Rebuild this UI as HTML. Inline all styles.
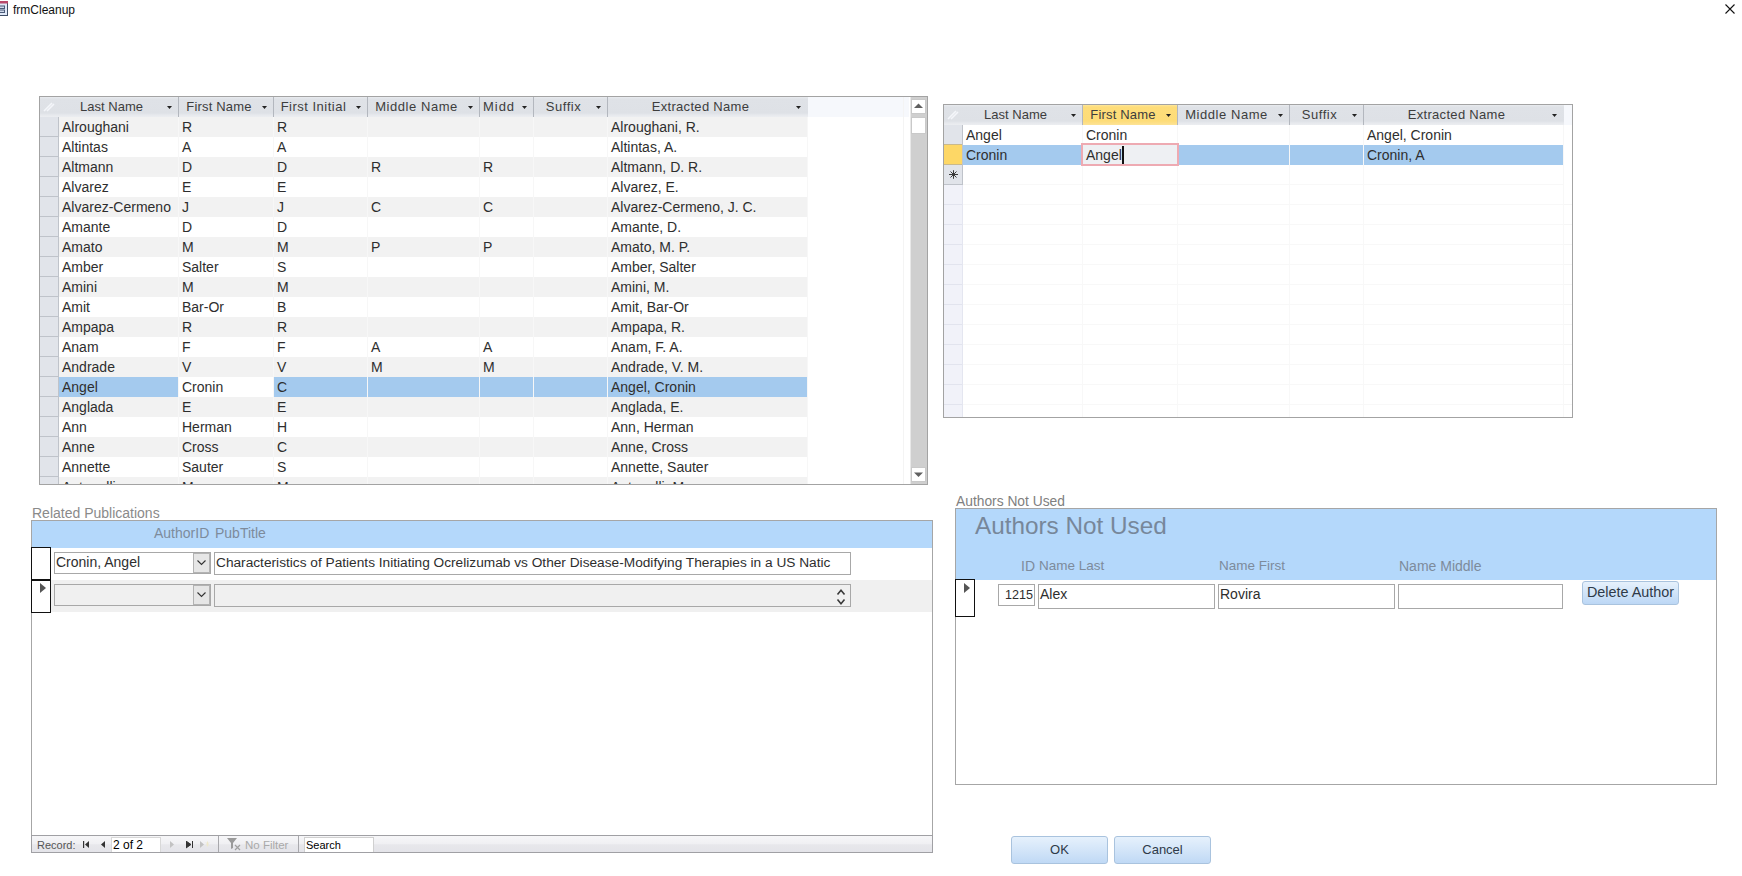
<!DOCTYPE html><html><head><meta charset="utf-8"><style>
html,body{margin:0;padding:0;background:#fff;width:1742px;height:876px;overflow:hidden;position:relative;font-family:"Liberation Sans",sans-serif;}
div{position:absolute;box-sizing:border-box;}
.t{white-space:nowrap;line-height:20px;font-size:14px;color:#2e2e2e;}
.hd{white-space:nowrap;line-height:19px;font-size:13px;color:#3d3d3d;}
svg{position:absolute;}
</style></head><body>
<svg style="left:0;top:0" width="10" height="18" viewBox="0 0 10 18">
<rect x="-1" y="1.5" width="8.5" height="14" fill="#dfe8f7" stroke="#3e4d66" stroke-width="1"/>
<rect x="-1" y="1" width="9" height="2.5" fill="#b9496b"/>
<rect x="-1" y="6" width="5.5" height="2.5" fill="#cfd9ea" stroke="#4a5a78" stroke-width="1"/>
<rect x="-1" y="10" width="5.5" height="2.5" fill="#cfd9ea" stroke="#4a5a78" stroke-width="1"/>
</svg>
<div class="t" style="left:13px;top:1px;font-size:12px;line-height:18px;color:#111;">frmCleanup</div>
<svg style="left:1724px;top:3px" width="12" height="12" viewBox="0 0 12 12">
<path d="M1.5 1.5 L10.5 10.5 M10.5 1.5 L1.5 10.5" stroke="#111" stroke-width="1.1"/></svg>
<div style="left:39px;top:96px;width:889px;height:389px;border:1px solid #a3a3a3;background:#fff;"></div>
<div style="left:40px;top:97px;width:887px;height:387px;overflow:hidden;">
<div style="left:0px;top:0px;width:19px;height:20px;background:linear-gradient(#e9ebef 0px,#dfe2e7 2px,#dee1e6 16px,#e7e9ed 18px,#eceef1 20px);"></div>
<svg style="left:3px;top:3px" width="12" height="12"><path d="M1 11 L9 3 M4 11 L11 4" stroke="#f4f6fa" stroke-width="1.6"/></svg>
<div style="left:768px;top:0px;width:101px;height:20px;background:#f6f8fc;"></div>
<div style="left:19px;top:0px;width:120px;height:20px;background:linear-gradient(#e9ebef 0px,#dfe2e7 2px,#dee1e6 16px,#e7e9ed 18px,#eceef1 20px);border-right:1px solid #b3b7be;"></div>
<div class="hd" style="left:19px;top:0px;width:105px;height:19px;text-align:center;letter-spacing:0.03px;">Last Name</div>
<svg style="left:127px;top:9px" width="6" height="4"><path d="M0 0 H5 L2.5 3 Z" fill="#222"/></svg>
<div style="left:139px;top:0px;width:95px;height:20px;background:linear-gradient(#e9ebef 0px,#dfe2e7 2px,#dee1e6 16px,#e7e9ed 18px,#eceef1 20px);border-right:1px solid #b3b7be;"></div>
<div class="hd" style="left:139px;top:0px;width:80px;height:19px;text-align:center;letter-spacing:0.19px;">First Name</div>
<svg style="left:222px;top:9px" width="6" height="4"><path d="M0 0 H5 L2.5 3 Z" fill="#222"/></svg>
<div style="left:234px;top:0px;width:94px;height:20px;background:linear-gradient(#e9ebef 0px,#dfe2e7 2px,#dee1e6 16px,#e7e9ed 18px,#eceef1 20px);border-right:1px solid #b3b7be;"></div>
<div class="hd" style="left:234px;top:0px;width:79px;height:19px;text-align:center;letter-spacing:0.50px;">First Initial</div>
<svg style="left:316px;top:9px" width="6" height="4"><path d="M0 0 H5 L2.5 3 Z" fill="#222"/></svg>
<div style="left:328px;top:0px;width:112px;height:20px;background:linear-gradient(#e9ebef 0px,#dfe2e7 2px,#dee1e6 16px,#e7e9ed 18px,#eceef1 20px);border-right:1px solid #b3b7be;"></div>
<div class="hd" style="left:328px;top:0px;width:97px;height:19px;text-align:center;letter-spacing:0.56px;">Middle Name</div>
<svg style="left:428px;top:9px" width="6" height="4"><path d="M0 0 H5 L2.5 3 Z" fill="#222"/></svg>
<div style="left:440px;top:0px;width:54px;height:20px;background:linear-gradient(#e9ebef 0px,#dfe2e7 2px,#dee1e6 16px,#e7e9ed 18px,#eceef1 20px);border-right:1px solid #b3b7be;"></div>
<div class="hd" style="left:443px;top:0px;font-size:13px;letter-spacing:0.97px;">Midd</div>
<svg style="left:482px;top:9px" width="6" height="4"><path d="M0 0 H5 L2.5 3 Z" fill="#222"/></svg>
<div style="left:494px;top:0px;width:74px;height:20px;background:linear-gradient(#e9ebef 0px,#dfe2e7 2px,#dee1e6 16px,#e7e9ed 18px,#eceef1 20px);border-right:1px solid #b3b7be;"></div>
<div class="hd" style="left:494px;top:0px;width:59px;height:19px;text-align:center;letter-spacing:0.56px;">Suffix</div>
<svg style="left:556px;top:9px" width="6" height="4"><path d="M0 0 H5 L2.5 3 Z" fill="#222"/></svg>
<div style="left:568px;top:0px;width:200px;height:20px;background:linear-gradient(#e9ebef 0px,#dfe2e7 2px,#dee1e6 16px,#e7e9ed 18px,#eceef1 20px);"></div>
<div class="hd" style="left:568px;top:0px;width:185px;height:19px;text-align:center;letter-spacing:0.31px;">Extracted Name</div>
<svg style="left:756px;top:9px" width="6" height="4"><path d="M0 0 H5 L2.5 3 Z" fill="#222"/></svg>
<div style="left:0px;top:20px;width:19px;height:20px;background:#e1e4ea;border-bottom:1px solid #bfc3ca;"></div>
<div style="left:19px;top:20px;width:749px;height:20px;background:#f2f2f2;"></div>
<div style="left:19px;top:20px;width:120px;height:20px;border-right:1px solid #f7f7f7;"></div>
<div class="t" style="left:22px;top:20px;font-size:14px;line-height:21px;">Alroughani</div>
<div style="left:139px;top:20px;width:95px;height:20px;border-right:1px solid #f7f7f7;"></div>
<div class="t" style="left:142px;top:20px;font-size:14px;line-height:21px;">R</div>
<div style="left:234px;top:20px;width:94px;height:20px;border-right:1px solid #f7f7f7;"></div>
<div class="t" style="left:237px;top:20px;font-size:14px;line-height:21px;">R</div>
<div style="left:328px;top:20px;width:112px;height:20px;border-right:1px solid #f7f7f7;"></div>
<div style="left:440px;top:20px;width:54px;height:20px;border-right:1px solid #f7f7f7;"></div>
<div style="left:494px;top:20px;width:74px;height:20px;border-right:1px solid #f7f7f7;"></div>
<div style="left:568px;top:20px;width:200px;height:20px;border-right:1px solid #f7f7f7;"></div>
<div class="t" style="left:571px;top:20px;font-size:14px;line-height:21px;">Alroughani, R.</div>
<div style="left:0px;top:40px;width:19px;height:20px;background:#e1e4ea;border-bottom:1px solid #bfc3ca;"></div>
<div style="left:19px;top:40px;width:749px;height:20px;background:#ffffff;"></div>
<div style="left:19px;top:40px;width:120px;height:20px;border-right:1px solid #f7f7f7;"></div>
<div class="t" style="left:22px;top:40px;font-size:14px;line-height:21px;">Altintas</div>
<div style="left:139px;top:40px;width:95px;height:20px;border-right:1px solid #f7f7f7;"></div>
<div class="t" style="left:142px;top:40px;font-size:14px;line-height:21px;">A</div>
<div style="left:234px;top:40px;width:94px;height:20px;border-right:1px solid #f7f7f7;"></div>
<div class="t" style="left:237px;top:40px;font-size:14px;line-height:21px;">A</div>
<div style="left:328px;top:40px;width:112px;height:20px;border-right:1px solid #f7f7f7;"></div>
<div style="left:440px;top:40px;width:54px;height:20px;border-right:1px solid #f7f7f7;"></div>
<div style="left:494px;top:40px;width:74px;height:20px;border-right:1px solid #f7f7f7;"></div>
<div style="left:568px;top:40px;width:200px;height:20px;border-right:1px solid #f7f7f7;"></div>
<div class="t" style="left:571px;top:40px;font-size:14px;line-height:21px;">Altintas, A.</div>
<div style="left:0px;top:60px;width:19px;height:20px;background:#e1e4ea;border-bottom:1px solid #bfc3ca;"></div>
<div style="left:19px;top:60px;width:749px;height:20px;background:#f2f2f2;"></div>
<div style="left:19px;top:60px;width:120px;height:20px;border-right:1px solid #f7f7f7;"></div>
<div class="t" style="left:22px;top:60px;font-size:14px;line-height:21px;">Altmann</div>
<div style="left:139px;top:60px;width:95px;height:20px;border-right:1px solid #f7f7f7;"></div>
<div class="t" style="left:142px;top:60px;font-size:14px;line-height:21px;">D</div>
<div style="left:234px;top:60px;width:94px;height:20px;border-right:1px solid #f7f7f7;"></div>
<div class="t" style="left:237px;top:60px;font-size:14px;line-height:21px;">D</div>
<div style="left:328px;top:60px;width:112px;height:20px;border-right:1px solid #f7f7f7;"></div>
<div class="t" style="left:331px;top:60px;font-size:14px;line-height:21px;">R</div>
<div style="left:440px;top:60px;width:54px;height:20px;border-right:1px solid #f7f7f7;"></div>
<div class="t" style="left:443px;top:60px;font-size:14px;line-height:21px;">R</div>
<div style="left:494px;top:60px;width:74px;height:20px;border-right:1px solid #f7f7f7;"></div>
<div style="left:568px;top:60px;width:200px;height:20px;border-right:1px solid #f7f7f7;"></div>
<div class="t" style="left:571px;top:60px;font-size:14px;line-height:21px;">Altmann, D. R.</div>
<div style="left:0px;top:80px;width:19px;height:20px;background:#e1e4ea;border-bottom:1px solid #bfc3ca;"></div>
<div style="left:19px;top:80px;width:749px;height:20px;background:#ffffff;"></div>
<div style="left:19px;top:80px;width:120px;height:20px;border-right:1px solid #f7f7f7;"></div>
<div class="t" style="left:22px;top:80px;font-size:14px;line-height:21px;">Alvarez</div>
<div style="left:139px;top:80px;width:95px;height:20px;border-right:1px solid #f7f7f7;"></div>
<div class="t" style="left:142px;top:80px;font-size:14px;line-height:21px;">E</div>
<div style="left:234px;top:80px;width:94px;height:20px;border-right:1px solid #f7f7f7;"></div>
<div class="t" style="left:237px;top:80px;font-size:14px;line-height:21px;">E</div>
<div style="left:328px;top:80px;width:112px;height:20px;border-right:1px solid #f7f7f7;"></div>
<div style="left:440px;top:80px;width:54px;height:20px;border-right:1px solid #f7f7f7;"></div>
<div style="left:494px;top:80px;width:74px;height:20px;border-right:1px solid #f7f7f7;"></div>
<div style="left:568px;top:80px;width:200px;height:20px;border-right:1px solid #f7f7f7;"></div>
<div class="t" style="left:571px;top:80px;font-size:14px;line-height:21px;">Alvarez, E.</div>
<div style="left:0px;top:100px;width:19px;height:20px;background:#e1e4ea;border-bottom:1px solid #bfc3ca;"></div>
<div style="left:19px;top:100px;width:749px;height:20px;background:#f2f2f2;"></div>
<div style="left:19px;top:100px;width:120px;height:20px;border-right:1px solid #f7f7f7;"></div>
<div class="t" style="left:22px;top:100px;font-size:14px;line-height:21px;">Alvarez-Cermeno</div>
<div style="left:139px;top:100px;width:95px;height:20px;border-right:1px solid #f7f7f7;"></div>
<div class="t" style="left:142px;top:100px;font-size:14px;line-height:21px;">J</div>
<div style="left:234px;top:100px;width:94px;height:20px;border-right:1px solid #f7f7f7;"></div>
<div class="t" style="left:237px;top:100px;font-size:14px;line-height:21px;">J</div>
<div style="left:328px;top:100px;width:112px;height:20px;border-right:1px solid #f7f7f7;"></div>
<div class="t" style="left:331px;top:100px;font-size:14px;line-height:21px;">C</div>
<div style="left:440px;top:100px;width:54px;height:20px;border-right:1px solid #f7f7f7;"></div>
<div class="t" style="left:443px;top:100px;font-size:14px;line-height:21px;">C</div>
<div style="left:494px;top:100px;width:74px;height:20px;border-right:1px solid #f7f7f7;"></div>
<div style="left:568px;top:100px;width:200px;height:20px;border-right:1px solid #f7f7f7;"></div>
<div class="t" style="left:571px;top:100px;font-size:14px;line-height:21px;">Alvarez-Cermeno, J. C.</div>
<div style="left:0px;top:120px;width:19px;height:20px;background:#e1e4ea;border-bottom:1px solid #bfc3ca;"></div>
<div style="left:19px;top:120px;width:749px;height:20px;background:#ffffff;"></div>
<div style="left:19px;top:120px;width:120px;height:20px;border-right:1px solid #f7f7f7;"></div>
<div class="t" style="left:22px;top:120px;font-size:14px;line-height:21px;">Amante</div>
<div style="left:139px;top:120px;width:95px;height:20px;border-right:1px solid #f7f7f7;"></div>
<div class="t" style="left:142px;top:120px;font-size:14px;line-height:21px;">D</div>
<div style="left:234px;top:120px;width:94px;height:20px;border-right:1px solid #f7f7f7;"></div>
<div class="t" style="left:237px;top:120px;font-size:14px;line-height:21px;">D</div>
<div style="left:328px;top:120px;width:112px;height:20px;border-right:1px solid #f7f7f7;"></div>
<div style="left:440px;top:120px;width:54px;height:20px;border-right:1px solid #f7f7f7;"></div>
<div style="left:494px;top:120px;width:74px;height:20px;border-right:1px solid #f7f7f7;"></div>
<div style="left:568px;top:120px;width:200px;height:20px;border-right:1px solid #f7f7f7;"></div>
<div class="t" style="left:571px;top:120px;font-size:14px;line-height:21px;">Amante, D.</div>
<div style="left:0px;top:140px;width:19px;height:20px;background:#e1e4ea;border-bottom:1px solid #bfc3ca;"></div>
<div style="left:19px;top:140px;width:749px;height:20px;background:#f2f2f2;"></div>
<div style="left:19px;top:140px;width:120px;height:20px;border-right:1px solid #f7f7f7;"></div>
<div class="t" style="left:22px;top:140px;font-size:14px;line-height:21px;">Amato</div>
<div style="left:139px;top:140px;width:95px;height:20px;border-right:1px solid #f7f7f7;"></div>
<div class="t" style="left:142px;top:140px;font-size:14px;line-height:21px;">M</div>
<div style="left:234px;top:140px;width:94px;height:20px;border-right:1px solid #f7f7f7;"></div>
<div class="t" style="left:237px;top:140px;font-size:14px;line-height:21px;">M</div>
<div style="left:328px;top:140px;width:112px;height:20px;border-right:1px solid #f7f7f7;"></div>
<div class="t" style="left:331px;top:140px;font-size:14px;line-height:21px;">P</div>
<div style="left:440px;top:140px;width:54px;height:20px;border-right:1px solid #f7f7f7;"></div>
<div class="t" style="left:443px;top:140px;font-size:14px;line-height:21px;">P</div>
<div style="left:494px;top:140px;width:74px;height:20px;border-right:1px solid #f7f7f7;"></div>
<div style="left:568px;top:140px;width:200px;height:20px;border-right:1px solid #f7f7f7;"></div>
<div class="t" style="left:571px;top:140px;font-size:14px;line-height:21px;">Amato, M. P.</div>
<div style="left:0px;top:160px;width:19px;height:20px;background:#e1e4ea;border-bottom:1px solid #bfc3ca;"></div>
<div style="left:19px;top:160px;width:749px;height:20px;background:#ffffff;"></div>
<div style="left:19px;top:160px;width:120px;height:20px;border-right:1px solid #f7f7f7;"></div>
<div class="t" style="left:22px;top:160px;font-size:14px;line-height:21px;">Amber</div>
<div style="left:139px;top:160px;width:95px;height:20px;border-right:1px solid #f7f7f7;"></div>
<div class="t" style="left:142px;top:160px;font-size:14px;line-height:21px;">Salter</div>
<div style="left:234px;top:160px;width:94px;height:20px;border-right:1px solid #f7f7f7;"></div>
<div class="t" style="left:237px;top:160px;font-size:14px;line-height:21px;">S</div>
<div style="left:328px;top:160px;width:112px;height:20px;border-right:1px solid #f7f7f7;"></div>
<div style="left:440px;top:160px;width:54px;height:20px;border-right:1px solid #f7f7f7;"></div>
<div style="left:494px;top:160px;width:74px;height:20px;border-right:1px solid #f7f7f7;"></div>
<div style="left:568px;top:160px;width:200px;height:20px;border-right:1px solid #f7f7f7;"></div>
<div class="t" style="left:571px;top:160px;font-size:14px;line-height:21px;">Amber, Salter</div>
<div style="left:0px;top:180px;width:19px;height:20px;background:#e1e4ea;border-bottom:1px solid #bfc3ca;"></div>
<div style="left:19px;top:180px;width:749px;height:20px;background:#f2f2f2;"></div>
<div style="left:19px;top:180px;width:120px;height:20px;border-right:1px solid #f7f7f7;"></div>
<div class="t" style="left:22px;top:180px;font-size:14px;line-height:21px;">Amini</div>
<div style="left:139px;top:180px;width:95px;height:20px;border-right:1px solid #f7f7f7;"></div>
<div class="t" style="left:142px;top:180px;font-size:14px;line-height:21px;">M</div>
<div style="left:234px;top:180px;width:94px;height:20px;border-right:1px solid #f7f7f7;"></div>
<div class="t" style="left:237px;top:180px;font-size:14px;line-height:21px;">M</div>
<div style="left:328px;top:180px;width:112px;height:20px;border-right:1px solid #f7f7f7;"></div>
<div style="left:440px;top:180px;width:54px;height:20px;border-right:1px solid #f7f7f7;"></div>
<div style="left:494px;top:180px;width:74px;height:20px;border-right:1px solid #f7f7f7;"></div>
<div style="left:568px;top:180px;width:200px;height:20px;border-right:1px solid #f7f7f7;"></div>
<div class="t" style="left:571px;top:180px;font-size:14px;line-height:21px;">Amini, M.</div>
<div style="left:0px;top:200px;width:19px;height:20px;background:#e1e4ea;border-bottom:1px solid #bfc3ca;"></div>
<div style="left:19px;top:200px;width:749px;height:20px;background:#ffffff;"></div>
<div style="left:19px;top:200px;width:120px;height:20px;border-right:1px solid #f7f7f7;"></div>
<div class="t" style="left:22px;top:200px;font-size:14px;line-height:21px;">Amit</div>
<div style="left:139px;top:200px;width:95px;height:20px;border-right:1px solid #f7f7f7;"></div>
<div class="t" style="left:142px;top:200px;font-size:14px;line-height:21px;">Bar-Or</div>
<div style="left:234px;top:200px;width:94px;height:20px;border-right:1px solid #f7f7f7;"></div>
<div class="t" style="left:237px;top:200px;font-size:14px;line-height:21px;">B</div>
<div style="left:328px;top:200px;width:112px;height:20px;border-right:1px solid #f7f7f7;"></div>
<div style="left:440px;top:200px;width:54px;height:20px;border-right:1px solid #f7f7f7;"></div>
<div style="left:494px;top:200px;width:74px;height:20px;border-right:1px solid #f7f7f7;"></div>
<div style="left:568px;top:200px;width:200px;height:20px;border-right:1px solid #f7f7f7;"></div>
<div class="t" style="left:571px;top:200px;font-size:14px;line-height:21px;">Amit, Bar-Or</div>
<div style="left:0px;top:220px;width:19px;height:20px;background:#e1e4ea;border-bottom:1px solid #bfc3ca;"></div>
<div style="left:19px;top:220px;width:749px;height:20px;background:#f2f2f2;"></div>
<div style="left:19px;top:220px;width:120px;height:20px;border-right:1px solid #f7f7f7;"></div>
<div class="t" style="left:22px;top:220px;font-size:14px;line-height:21px;">Ampapa</div>
<div style="left:139px;top:220px;width:95px;height:20px;border-right:1px solid #f7f7f7;"></div>
<div class="t" style="left:142px;top:220px;font-size:14px;line-height:21px;">R</div>
<div style="left:234px;top:220px;width:94px;height:20px;border-right:1px solid #f7f7f7;"></div>
<div class="t" style="left:237px;top:220px;font-size:14px;line-height:21px;">R</div>
<div style="left:328px;top:220px;width:112px;height:20px;border-right:1px solid #f7f7f7;"></div>
<div style="left:440px;top:220px;width:54px;height:20px;border-right:1px solid #f7f7f7;"></div>
<div style="left:494px;top:220px;width:74px;height:20px;border-right:1px solid #f7f7f7;"></div>
<div style="left:568px;top:220px;width:200px;height:20px;border-right:1px solid #f7f7f7;"></div>
<div class="t" style="left:571px;top:220px;font-size:14px;line-height:21px;">Ampapa, R.</div>
<div style="left:0px;top:240px;width:19px;height:20px;background:#e1e4ea;border-bottom:1px solid #bfc3ca;"></div>
<div style="left:19px;top:240px;width:749px;height:20px;background:#ffffff;"></div>
<div style="left:19px;top:240px;width:120px;height:20px;border-right:1px solid #f7f7f7;"></div>
<div class="t" style="left:22px;top:240px;font-size:14px;line-height:21px;">Anam</div>
<div style="left:139px;top:240px;width:95px;height:20px;border-right:1px solid #f7f7f7;"></div>
<div class="t" style="left:142px;top:240px;font-size:14px;line-height:21px;">F</div>
<div style="left:234px;top:240px;width:94px;height:20px;border-right:1px solid #f7f7f7;"></div>
<div class="t" style="left:237px;top:240px;font-size:14px;line-height:21px;">F</div>
<div style="left:328px;top:240px;width:112px;height:20px;border-right:1px solid #f7f7f7;"></div>
<div class="t" style="left:331px;top:240px;font-size:14px;line-height:21px;">A</div>
<div style="left:440px;top:240px;width:54px;height:20px;border-right:1px solid #f7f7f7;"></div>
<div class="t" style="left:443px;top:240px;font-size:14px;line-height:21px;">A</div>
<div style="left:494px;top:240px;width:74px;height:20px;border-right:1px solid #f7f7f7;"></div>
<div style="left:568px;top:240px;width:200px;height:20px;border-right:1px solid #f7f7f7;"></div>
<div class="t" style="left:571px;top:240px;font-size:14px;line-height:21px;">Anam, F. A.</div>
<div style="left:0px;top:260px;width:19px;height:20px;background:#e1e4ea;border-bottom:1px solid #bfc3ca;"></div>
<div style="left:19px;top:260px;width:749px;height:20px;background:#f2f2f2;"></div>
<div style="left:19px;top:260px;width:120px;height:20px;border-right:1px solid #f7f7f7;"></div>
<div class="t" style="left:22px;top:260px;font-size:14px;line-height:21px;">Andrade</div>
<div style="left:139px;top:260px;width:95px;height:20px;border-right:1px solid #f7f7f7;"></div>
<div class="t" style="left:142px;top:260px;font-size:14px;line-height:21px;">V</div>
<div style="left:234px;top:260px;width:94px;height:20px;border-right:1px solid #f7f7f7;"></div>
<div class="t" style="left:237px;top:260px;font-size:14px;line-height:21px;">V</div>
<div style="left:328px;top:260px;width:112px;height:20px;border-right:1px solid #f7f7f7;"></div>
<div class="t" style="left:331px;top:260px;font-size:14px;line-height:21px;">M</div>
<div style="left:440px;top:260px;width:54px;height:20px;border-right:1px solid #f7f7f7;"></div>
<div class="t" style="left:443px;top:260px;font-size:14px;line-height:21px;">M</div>
<div style="left:494px;top:260px;width:74px;height:20px;border-right:1px solid #f7f7f7;"></div>
<div style="left:568px;top:260px;width:200px;height:20px;border-right:1px solid #f7f7f7;"></div>
<div class="t" style="left:571px;top:260px;font-size:14px;line-height:21px;">Andrade, V. M.</div>
<div style="left:0px;top:280px;width:19px;height:20px;background:#e1e4ea;border-bottom:1px solid #bfc3ca;"></div>
<div style="left:19px;top:280px;width:749px;height:20px;background:#a4caee;"></div>
<div style="left:19px;top:280px;width:120px;height:20px;border-right:1px solid #f7f7f7;"></div>
<div class="t" style="left:22px;top:280px;font-size:14px;line-height:21px;">Angel</div>
<div style="left:139px;top:280px;width:95px;height:20px;border-right:1px solid #f7f7f7;background:#ffffff;"></div>
<div class="t" style="left:142px;top:280px;font-size:14px;line-height:21px;">Cronin</div>
<div style="left:234px;top:280px;width:94px;height:20px;border-right:1px solid #f7f7f7;"></div>
<div class="t" style="left:237px;top:280px;font-size:14px;line-height:21px;">C</div>
<div style="left:328px;top:280px;width:112px;height:20px;border-right:1px solid #f7f7f7;"></div>
<div style="left:440px;top:280px;width:54px;height:20px;border-right:1px solid #f7f7f7;"></div>
<div style="left:494px;top:280px;width:74px;height:20px;border-right:1px solid #f7f7f7;"></div>
<div style="left:568px;top:280px;width:200px;height:20px;border-right:1px solid #f7f7f7;"></div>
<div class="t" style="left:571px;top:280px;font-size:14px;line-height:21px;">Angel, Cronin</div>
<div style="left:0px;top:300px;width:19px;height:20px;background:#e1e4ea;border-bottom:1px solid #bfc3ca;"></div>
<div style="left:19px;top:300px;width:749px;height:20px;background:#f2f2f2;"></div>
<div style="left:19px;top:300px;width:120px;height:20px;border-right:1px solid #f7f7f7;"></div>
<div class="t" style="left:22px;top:300px;font-size:14px;line-height:21px;">Anglada</div>
<div style="left:139px;top:300px;width:95px;height:20px;border-right:1px solid #f7f7f7;"></div>
<div class="t" style="left:142px;top:300px;font-size:14px;line-height:21px;">E</div>
<div style="left:234px;top:300px;width:94px;height:20px;border-right:1px solid #f7f7f7;"></div>
<div class="t" style="left:237px;top:300px;font-size:14px;line-height:21px;">E</div>
<div style="left:328px;top:300px;width:112px;height:20px;border-right:1px solid #f7f7f7;"></div>
<div style="left:440px;top:300px;width:54px;height:20px;border-right:1px solid #f7f7f7;"></div>
<div style="left:494px;top:300px;width:74px;height:20px;border-right:1px solid #f7f7f7;"></div>
<div style="left:568px;top:300px;width:200px;height:20px;border-right:1px solid #f7f7f7;"></div>
<div class="t" style="left:571px;top:300px;font-size:14px;line-height:21px;">Anglada, E.</div>
<div style="left:0px;top:320px;width:19px;height:20px;background:#e1e4ea;border-bottom:1px solid #bfc3ca;"></div>
<div style="left:19px;top:320px;width:749px;height:20px;background:#ffffff;"></div>
<div style="left:19px;top:320px;width:120px;height:20px;border-right:1px solid #f7f7f7;"></div>
<div class="t" style="left:22px;top:320px;font-size:14px;line-height:21px;">Ann</div>
<div style="left:139px;top:320px;width:95px;height:20px;border-right:1px solid #f7f7f7;"></div>
<div class="t" style="left:142px;top:320px;font-size:14px;line-height:21px;">Herman</div>
<div style="left:234px;top:320px;width:94px;height:20px;border-right:1px solid #f7f7f7;"></div>
<div class="t" style="left:237px;top:320px;font-size:14px;line-height:21px;">H</div>
<div style="left:328px;top:320px;width:112px;height:20px;border-right:1px solid #f7f7f7;"></div>
<div style="left:440px;top:320px;width:54px;height:20px;border-right:1px solid #f7f7f7;"></div>
<div style="left:494px;top:320px;width:74px;height:20px;border-right:1px solid #f7f7f7;"></div>
<div style="left:568px;top:320px;width:200px;height:20px;border-right:1px solid #f7f7f7;"></div>
<div class="t" style="left:571px;top:320px;font-size:14px;line-height:21px;">Ann, Herman</div>
<div style="left:0px;top:340px;width:19px;height:20px;background:#e1e4ea;border-bottom:1px solid #bfc3ca;"></div>
<div style="left:19px;top:340px;width:749px;height:20px;background:#f2f2f2;"></div>
<div style="left:19px;top:340px;width:120px;height:20px;border-right:1px solid #f7f7f7;"></div>
<div class="t" style="left:22px;top:340px;font-size:14px;line-height:21px;">Anne</div>
<div style="left:139px;top:340px;width:95px;height:20px;border-right:1px solid #f7f7f7;"></div>
<div class="t" style="left:142px;top:340px;font-size:14px;line-height:21px;">Cross</div>
<div style="left:234px;top:340px;width:94px;height:20px;border-right:1px solid #f7f7f7;"></div>
<div class="t" style="left:237px;top:340px;font-size:14px;line-height:21px;">C</div>
<div style="left:328px;top:340px;width:112px;height:20px;border-right:1px solid #f7f7f7;"></div>
<div style="left:440px;top:340px;width:54px;height:20px;border-right:1px solid #f7f7f7;"></div>
<div style="left:494px;top:340px;width:74px;height:20px;border-right:1px solid #f7f7f7;"></div>
<div style="left:568px;top:340px;width:200px;height:20px;border-right:1px solid #f7f7f7;"></div>
<div class="t" style="left:571px;top:340px;font-size:14px;line-height:21px;">Anne, Cross</div>
<div style="left:0px;top:360px;width:19px;height:20px;background:#e1e4ea;border-bottom:1px solid #bfc3ca;"></div>
<div style="left:19px;top:360px;width:749px;height:20px;background:#ffffff;"></div>
<div style="left:19px;top:360px;width:120px;height:20px;border-right:1px solid #f7f7f7;"></div>
<div class="t" style="left:22px;top:360px;font-size:14px;line-height:21px;">Annette</div>
<div style="left:139px;top:360px;width:95px;height:20px;border-right:1px solid #f7f7f7;"></div>
<div class="t" style="left:142px;top:360px;font-size:14px;line-height:21px;">Sauter</div>
<div style="left:234px;top:360px;width:94px;height:20px;border-right:1px solid #f7f7f7;"></div>
<div class="t" style="left:237px;top:360px;font-size:14px;line-height:21px;">S</div>
<div style="left:328px;top:360px;width:112px;height:20px;border-right:1px solid #f7f7f7;"></div>
<div style="left:440px;top:360px;width:54px;height:20px;border-right:1px solid #f7f7f7;"></div>
<div style="left:494px;top:360px;width:74px;height:20px;border-right:1px solid #f7f7f7;"></div>
<div style="left:568px;top:360px;width:200px;height:20px;border-right:1px solid #f7f7f7;"></div>
<div class="t" style="left:571px;top:360px;font-size:14px;line-height:21px;">Annette, Sauter</div>
<div style="left:0px;top:380px;width:19px;height:20px;background:#e1e4ea;border-bottom:1px solid #bfc3ca;"></div>
<div style="left:19px;top:380px;width:749px;height:20px;background:#f2f2f2;"></div>
<div style="left:19px;top:380px;width:120px;height:20px;border-right:1px solid #f7f7f7;"></div>
<div class="t" style="left:22px;top:380px;font-size:14px;line-height:21px;">Antonelli</div>
<div style="left:139px;top:380px;width:95px;height:20px;border-right:1px solid #f7f7f7;"></div>
<div class="t" style="left:142px;top:380px;font-size:14px;line-height:21px;">M</div>
<div style="left:234px;top:380px;width:94px;height:20px;border-right:1px solid #f7f7f7;"></div>
<div class="t" style="left:237px;top:380px;font-size:14px;line-height:21px;">M</div>
<div style="left:328px;top:380px;width:112px;height:20px;border-right:1px solid #f7f7f7;"></div>
<div style="left:440px;top:380px;width:54px;height:20px;border-right:1px solid #f7f7f7;"></div>
<div style="left:494px;top:380px;width:74px;height:20px;border-right:1px solid #f7f7f7;"></div>
<div style="left:568px;top:380px;width:200px;height:20px;border-right:1px solid #f7f7f7;"></div>
<div class="t" style="left:571px;top:380px;font-size:14px;line-height:21px;">Antonelli, M.</div>
<div style="left:18px;top:20px;width:1px;height:367px;background:#bfc3ca;"></div>
<div style="left:863px;top:0px;width:1px;height:387px;background:#f4f4f4;"></div>
<div style="left:870px;top:0px;width:17px;height:387px;background:#cfcfcf;border-left:1px solid #e8e8e8;"></div>
<div style="left:871px;top:2px;width:15px;height:15px;background:#fff;border:1px solid #c9c9c9;"></div>
<svg style="left:873px;top:6px" width="11" height="6"><path d="M1 5 L5.5 0.5 L10 5 Z" fill="#606060"/></svg>
<div style="left:871px;top:20px;width:15px;height:17px;background:#fff;border:1px solid #c9c9c9;"></div>
<div style="left:871px;top:370px;width:15px;height:15px;background:#fff;border:1px solid #c9c9c9;"></div>
<svg style="left:873px;top:375px" width="11" height="6"><path d="M1 0.5 L5.5 5 L10 0.5 Z" fill="#606060"/></svg>
</div>
<div style="left:943px;top:104px;width:630px;height:314px;border:1px solid #a3a3a3;background:#fff;"></div>
<div style="left:944px;top:105px;width:628px;height:312px;overflow:hidden;">
<div style="left:0px;top:0px;width:19px;height:20px;background:linear-gradient(#e9ebef 0px,#dfe2e7 2px,#dee1e6 16px,#e7e9ed 18px,#eceef1 20px);"></div>
<svg style="left:3px;top:3px" width="12" height="12"><path d="M1 11 L9 3 M4 11 L11 4" stroke="#f4f6fa" stroke-width="1.6"/></svg>
<div style="left:620px;top:0px;width:8px;height:20px;background:#f6f8fc;"></div>
<div style="left:19px;top:0px;width:120px;height:20px;background:linear-gradient(#e9ebef 0px,#dfe2e7 2px,#dee1e6 16px,#e7e9ed 18px,#eceef1 20px);border-right:1px solid #b3b7be;"></div>
<div class="hd" style="left:19px;top:0px;width:105px;height:19px;text-align:center;letter-spacing:0.03px;">Last Name</div>
<svg style="left:127px;top:9px" width="6" height="4"><path d="M0 0 H5 L2.5 3 Z" fill="#222"/></svg>
<div style="left:139px;top:0px;width:95px;height:20px;background:linear-gradient(#fee89c 0px,#fedd7a 2px,#fddc78 16px,#fde396 20px);border-right:1px solid #b3b7be;"></div>
<div class="hd" style="left:139px;top:0px;width:80px;height:19px;text-align:center;letter-spacing:0.19px;">First Name</div>
<svg style="left:222px;top:9px" width="6" height="4"><path d="M0 0 H5 L2.5 3 Z" fill="#222"/></svg>
<div style="left:234px;top:0px;width:112px;height:20px;background:linear-gradient(#e9ebef 0px,#dfe2e7 2px,#dee1e6 16px,#e7e9ed 18px,#eceef1 20px);border-right:1px solid #b3b7be;"></div>
<div class="hd" style="left:234px;top:0px;width:97px;height:19px;text-align:center;letter-spacing:0.56px;">Middle Name</div>
<svg style="left:334px;top:9px" width="6" height="4"><path d="M0 0 H5 L2.5 3 Z" fill="#222"/></svg>
<div style="left:346px;top:0px;width:74px;height:20px;background:linear-gradient(#e9ebef 0px,#dfe2e7 2px,#dee1e6 16px,#e7e9ed 18px,#eceef1 20px);border-right:1px solid #b3b7be;"></div>
<div class="hd" style="left:346px;top:0px;width:59px;height:19px;text-align:center;letter-spacing:0.56px;">Suffix</div>
<svg style="left:408px;top:9px" width="6" height="4"><path d="M0 0 H5 L2.5 3 Z" fill="#222"/></svg>
<div style="left:420px;top:0px;width:200px;height:20px;background:linear-gradient(#e9ebef 0px,#dfe2e7 2px,#dee1e6 16px,#e7e9ed 18px,#eceef1 20px);"></div>
<div class="hd" style="left:420px;top:0px;width:185px;height:19px;text-align:center;letter-spacing:0.31px;">Extracted Name</div>
<svg style="left:608px;top:9px" width="6" height="4"><path d="M0 0 H5 L2.5 3 Z" fill="#222"/></svg>
<div style="left:0px;top:20px;width:19px;height:20px;background:#e1e4ea;border-bottom:1px solid #bfc3ca;"></div>
<div style="left:19px;top:20px;width:601px;height:20px;background:#ffffff;"></div>
<div style="left:19px;top:20px;width:120px;height:20px;border-right:1px solid #f7f7f7;"></div>
<div class="t" style="left:22px;top:20px;font-size:14px;line-height:21px;">Angel</div>
<div style="left:139px;top:20px;width:95px;height:20px;border-right:1px solid #f7f7f7;"></div>
<div class="t" style="left:142px;top:20px;font-size:14px;line-height:21px;">Cronin</div>
<div style="left:234px;top:20px;width:112px;height:20px;border-right:1px solid #f7f7f7;"></div>
<div style="left:346px;top:20px;width:74px;height:20px;border-right:1px solid #f7f7f7;"></div>
<div style="left:420px;top:20px;width:200px;height:20px;border-right:1px solid #f7f7f7;"></div>
<div class="t" style="left:423px;top:20px;font-size:14px;line-height:21px;">Angel, Cronin</div>
<div style="left:0px;top:40px;width:19px;height:20px;background:#fdd766;border-bottom:1px solid #c9b98c;"></div>
<div style="left:0px;top:39px;width:19px;height:1px;background:#c9b98c;"></div>
<div style="left:19px;top:40px;width:601px;height:20px;background:#a4caee;"></div>
<div style="left:19px;top:40px;width:120px;height:20px;border-right:1px solid #f7f7f7;"></div>
<div class="t" style="left:22px;top:40px;font-size:14px;line-height:21px;">Cronin</div>
<div style="left:139px;top:40px;width:95px;height:20px;border-right:1px solid #f7f7f7;background:#ffffff;"></div>
<div class="t" style="left:142px;top:40px;font-size:14px;line-height:21px;">Angel</div>
<div style="left:234px;top:40px;width:112px;height:20px;border-right:1px solid #f7f7f7;"></div>
<div style="left:346px;top:40px;width:74px;height:20px;border-right:1px solid #f7f7f7;"></div>
<div style="left:420px;top:40px;width:200px;height:20px;border-right:1px solid #f7f7f7;"></div>
<div class="t" style="left:423px;top:40px;font-size:14px;line-height:21px;">Cronin, A</div>
<div style="left:0px;top:60px;width:19px;height:20px;background:#e1e4ea;border-bottom:1px solid #bfc3ca;"></div>
<svg style="left:0px;top:60px" width="19" height="20"><path d="M9.5 5.2 V13.8 M5 9.5 H14 M6.5 6.5 L12.5 12.5 M12.5 6.5 L6.5 12.5" stroke="#3a3a3a" stroke-width="1"/></svg>
<div style="left:19px;top:60px;width:601px;height:20px;background:#ffffff;"></div>
<div style="left:19px;top:60px;width:120px;height:20px;border-right:1px solid #f8f8f8;border-bottom:1px solid #f8f8f8;"></div>
<div style="left:139px;top:60px;width:95px;height:20px;border-right:1px solid #f8f8f8;border-bottom:1px solid #f8f8f8;"></div>
<div style="left:234px;top:60px;width:112px;height:20px;border-right:1px solid #f8f8f8;border-bottom:1px solid #f8f8f8;"></div>
<div style="left:346px;top:60px;width:74px;height:20px;border-right:1px solid #f8f8f8;border-bottom:1px solid #f8f8f8;"></div>
<div style="left:420px;top:60px;width:200px;height:20px;border-right:1px solid #f8f8f8;border-bottom:1px solid #f8f8f8;"></div>
<div style="left:0px;top:80px;width:19px;height:20px;background:#f1f2f9;border-bottom:1px solid #e2e4ee;"></div>
<div style="left:19px;top:80px;width:601px;height:20px;background:#ffffff;"></div>
<div style="left:19px;top:80px;width:120px;height:20px;border-right:1px solid #f8f8f8;border-bottom:1px solid #f8f8f8;"></div>
<div style="left:139px;top:80px;width:95px;height:20px;border-right:1px solid #f8f8f8;border-bottom:1px solid #f8f8f8;"></div>
<div style="left:234px;top:80px;width:112px;height:20px;border-right:1px solid #f8f8f8;border-bottom:1px solid #f8f8f8;"></div>
<div style="left:346px;top:80px;width:74px;height:20px;border-right:1px solid #f8f8f8;border-bottom:1px solid #f8f8f8;"></div>
<div style="left:420px;top:80px;width:200px;height:20px;border-right:1px solid #f8f8f8;border-bottom:1px solid #f8f8f8;"></div>
<div style="left:620px;top:80px;width:100px;height:20px;border-bottom:1px solid #f6f6f6;"></div>
<div style="left:0px;top:100px;width:19px;height:20px;background:#f1f2f9;border-bottom:1px solid #e2e4ee;"></div>
<div style="left:19px;top:100px;width:601px;height:20px;background:#ffffff;"></div>
<div style="left:19px;top:100px;width:120px;height:20px;border-right:1px solid #f8f8f8;border-bottom:1px solid #f8f8f8;"></div>
<div style="left:139px;top:100px;width:95px;height:20px;border-right:1px solid #f8f8f8;border-bottom:1px solid #f8f8f8;"></div>
<div style="left:234px;top:100px;width:112px;height:20px;border-right:1px solid #f8f8f8;border-bottom:1px solid #f8f8f8;"></div>
<div style="left:346px;top:100px;width:74px;height:20px;border-right:1px solid #f8f8f8;border-bottom:1px solid #f8f8f8;"></div>
<div style="left:420px;top:100px;width:200px;height:20px;border-right:1px solid #f8f8f8;border-bottom:1px solid #f8f8f8;"></div>
<div style="left:620px;top:100px;width:100px;height:20px;border-bottom:1px solid #f6f6f6;"></div>
<div style="left:0px;top:120px;width:19px;height:20px;background:#f1f2f9;border-bottom:1px solid #e2e4ee;"></div>
<div style="left:19px;top:120px;width:601px;height:20px;background:#ffffff;"></div>
<div style="left:19px;top:120px;width:120px;height:20px;border-right:1px solid #f8f8f8;border-bottom:1px solid #f8f8f8;"></div>
<div style="left:139px;top:120px;width:95px;height:20px;border-right:1px solid #f8f8f8;border-bottom:1px solid #f8f8f8;"></div>
<div style="left:234px;top:120px;width:112px;height:20px;border-right:1px solid #f8f8f8;border-bottom:1px solid #f8f8f8;"></div>
<div style="left:346px;top:120px;width:74px;height:20px;border-right:1px solid #f8f8f8;border-bottom:1px solid #f8f8f8;"></div>
<div style="left:420px;top:120px;width:200px;height:20px;border-right:1px solid #f8f8f8;border-bottom:1px solid #f8f8f8;"></div>
<div style="left:620px;top:120px;width:100px;height:20px;border-bottom:1px solid #f6f6f6;"></div>
<div style="left:0px;top:140px;width:19px;height:20px;background:#f1f2f9;border-bottom:1px solid #e2e4ee;"></div>
<div style="left:19px;top:140px;width:601px;height:20px;background:#ffffff;"></div>
<div style="left:19px;top:140px;width:120px;height:20px;border-right:1px solid #f8f8f8;border-bottom:1px solid #f8f8f8;"></div>
<div style="left:139px;top:140px;width:95px;height:20px;border-right:1px solid #f8f8f8;border-bottom:1px solid #f8f8f8;"></div>
<div style="left:234px;top:140px;width:112px;height:20px;border-right:1px solid #f8f8f8;border-bottom:1px solid #f8f8f8;"></div>
<div style="left:346px;top:140px;width:74px;height:20px;border-right:1px solid #f8f8f8;border-bottom:1px solid #f8f8f8;"></div>
<div style="left:420px;top:140px;width:200px;height:20px;border-right:1px solid #f8f8f8;border-bottom:1px solid #f8f8f8;"></div>
<div style="left:620px;top:140px;width:100px;height:20px;border-bottom:1px solid #f6f6f6;"></div>
<div style="left:0px;top:160px;width:19px;height:20px;background:#f1f2f9;border-bottom:1px solid #e2e4ee;"></div>
<div style="left:19px;top:160px;width:601px;height:20px;background:#ffffff;"></div>
<div style="left:19px;top:160px;width:120px;height:20px;border-right:1px solid #f8f8f8;border-bottom:1px solid #f8f8f8;"></div>
<div style="left:139px;top:160px;width:95px;height:20px;border-right:1px solid #f8f8f8;border-bottom:1px solid #f8f8f8;"></div>
<div style="left:234px;top:160px;width:112px;height:20px;border-right:1px solid #f8f8f8;border-bottom:1px solid #f8f8f8;"></div>
<div style="left:346px;top:160px;width:74px;height:20px;border-right:1px solid #f8f8f8;border-bottom:1px solid #f8f8f8;"></div>
<div style="left:420px;top:160px;width:200px;height:20px;border-right:1px solid #f8f8f8;border-bottom:1px solid #f8f8f8;"></div>
<div style="left:620px;top:160px;width:100px;height:20px;border-bottom:1px solid #f6f6f6;"></div>
<div style="left:0px;top:180px;width:19px;height:20px;background:#f1f2f9;border-bottom:1px solid #e2e4ee;"></div>
<div style="left:19px;top:180px;width:601px;height:20px;background:#ffffff;"></div>
<div style="left:19px;top:180px;width:120px;height:20px;border-right:1px solid #f8f8f8;border-bottom:1px solid #f8f8f8;"></div>
<div style="left:139px;top:180px;width:95px;height:20px;border-right:1px solid #f8f8f8;border-bottom:1px solid #f8f8f8;"></div>
<div style="left:234px;top:180px;width:112px;height:20px;border-right:1px solid #f8f8f8;border-bottom:1px solid #f8f8f8;"></div>
<div style="left:346px;top:180px;width:74px;height:20px;border-right:1px solid #f8f8f8;border-bottom:1px solid #f8f8f8;"></div>
<div style="left:420px;top:180px;width:200px;height:20px;border-right:1px solid #f8f8f8;border-bottom:1px solid #f8f8f8;"></div>
<div style="left:620px;top:180px;width:100px;height:20px;border-bottom:1px solid #f6f6f6;"></div>
<div style="left:0px;top:200px;width:19px;height:20px;background:#f1f2f9;border-bottom:1px solid #e2e4ee;"></div>
<div style="left:19px;top:200px;width:601px;height:20px;background:#ffffff;"></div>
<div style="left:19px;top:200px;width:120px;height:20px;border-right:1px solid #f8f8f8;border-bottom:1px solid #f8f8f8;"></div>
<div style="left:139px;top:200px;width:95px;height:20px;border-right:1px solid #f8f8f8;border-bottom:1px solid #f8f8f8;"></div>
<div style="left:234px;top:200px;width:112px;height:20px;border-right:1px solid #f8f8f8;border-bottom:1px solid #f8f8f8;"></div>
<div style="left:346px;top:200px;width:74px;height:20px;border-right:1px solid #f8f8f8;border-bottom:1px solid #f8f8f8;"></div>
<div style="left:420px;top:200px;width:200px;height:20px;border-right:1px solid #f8f8f8;border-bottom:1px solid #f8f8f8;"></div>
<div style="left:620px;top:200px;width:100px;height:20px;border-bottom:1px solid #f6f6f6;"></div>
<div style="left:0px;top:220px;width:19px;height:20px;background:#f1f2f9;border-bottom:1px solid #e2e4ee;"></div>
<div style="left:19px;top:220px;width:601px;height:20px;background:#ffffff;"></div>
<div style="left:19px;top:220px;width:120px;height:20px;border-right:1px solid #f8f8f8;border-bottom:1px solid #f8f8f8;"></div>
<div style="left:139px;top:220px;width:95px;height:20px;border-right:1px solid #f8f8f8;border-bottom:1px solid #f8f8f8;"></div>
<div style="left:234px;top:220px;width:112px;height:20px;border-right:1px solid #f8f8f8;border-bottom:1px solid #f8f8f8;"></div>
<div style="left:346px;top:220px;width:74px;height:20px;border-right:1px solid #f8f8f8;border-bottom:1px solid #f8f8f8;"></div>
<div style="left:420px;top:220px;width:200px;height:20px;border-right:1px solid #f8f8f8;border-bottom:1px solid #f8f8f8;"></div>
<div style="left:620px;top:220px;width:100px;height:20px;border-bottom:1px solid #f6f6f6;"></div>
<div style="left:0px;top:240px;width:19px;height:20px;background:#f1f2f9;border-bottom:1px solid #e2e4ee;"></div>
<div style="left:19px;top:240px;width:601px;height:20px;background:#ffffff;"></div>
<div style="left:19px;top:240px;width:120px;height:20px;border-right:1px solid #f8f8f8;border-bottom:1px solid #f8f8f8;"></div>
<div style="left:139px;top:240px;width:95px;height:20px;border-right:1px solid #f8f8f8;border-bottom:1px solid #f8f8f8;"></div>
<div style="left:234px;top:240px;width:112px;height:20px;border-right:1px solid #f8f8f8;border-bottom:1px solid #f8f8f8;"></div>
<div style="left:346px;top:240px;width:74px;height:20px;border-right:1px solid #f8f8f8;border-bottom:1px solid #f8f8f8;"></div>
<div style="left:420px;top:240px;width:200px;height:20px;border-right:1px solid #f8f8f8;border-bottom:1px solid #f8f8f8;"></div>
<div style="left:620px;top:240px;width:100px;height:20px;border-bottom:1px solid #f6f6f6;"></div>
<div style="left:0px;top:260px;width:19px;height:20px;background:#f1f2f9;border-bottom:1px solid #e2e4ee;"></div>
<div style="left:19px;top:260px;width:601px;height:20px;background:#ffffff;"></div>
<div style="left:19px;top:260px;width:120px;height:20px;border-right:1px solid #f8f8f8;border-bottom:1px solid #f8f8f8;"></div>
<div style="left:139px;top:260px;width:95px;height:20px;border-right:1px solid #f8f8f8;border-bottom:1px solid #f8f8f8;"></div>
<div style="left:234px;top:260px;width:112px;height:20px;border-right:1px solid #f8f8f8;border-bottom:1px solid #f8f8f8;"></div>
<div style="left:346px;top:260px;width:74px;height:20px;border-right:1px solid #f8f8f8;border-bottom:1px solid #f8f8f8;"></div>
<div style="left:420px;top:260px;width:200px;height:20px;border-right:1px solid #f8f8f8;border-bottom:1px solid #f8f8f8;"></div>
<div style="left:620px;top:260px;width:100px;height:20px;border-bottom:1px solid #f6f6f6;"></div>
<div style="left:0px;top:280px;width:19px;height:20px;background:#f1f2f9;border-bottom:1px solid #e2e4ee;"></div>
<div style="left:19px;top:280px;width:601px;height:20px;background:#ffffff;"></div>
<div style="left:19px;top:280px;width:120px;height:20px;border-right:1px solid #f8f8f8;border-bottom:1px solid #f8f8f8;"></div>
<div style="left:139px;top:280px;width:95px;height:20px;border-right:1px solid #f8f8f8;border-bottom:1px solid #f8f8f8;"></div>
<div style="left:234px;top:280px;width:112px;height:20px;border-right:1px solid #f8f8f8;border-bottom:1px solid #f8f8f8;"></div>
<div style="left:346px;top:280px;width:74px;height:20px;border-right:1px solid #f8f8f8;border-bottom:1px solid #f8f8f8;"></div>
<div style="left:420px;top:280px;width:200px;height:20px;border-right:1px solid #f8f8f8;border-bottom:1px solid #f8f8f8;"></div>
<div style="left:620px;top:280px;width:100px;height:20px;border-bottom:1px solid #f6f6f6;"></div>
<div style="left:0px;top:300px;width:19px;height:20px;background:#f1f2f9;border-bottom:1px solid #e2e4ee;"></div>
<div style="left:19px;top:300px;width:601px;height:20px;background:#ffffff;"></div>
<div style="left:19px;top:300px;width:120px;height:20px;border-right:1px solid #f8f8f8;border-bottom:1px solid #f8f8f8;"></div>
<div style="left:139px;top:300px;width:95px;height:20px;border-right:1px solid #f8f8f8;border-bottom:1px solid #f8f8f8;"></div>
<div style="left:234px;top:300px;width:112px;height:20px;border-right:1px solid #f8f8f8;border-bottom:1px solid #f8f8f8;"></div>
<div style="left:346px;top:300px;width:74px;height:20px;border-right:1px solid #f8f8f8;border-bottom:1px solid #f8f8f8;"></div>
<div style="left:420px;top:300px;width:200px;height:20px;border-right:1px solid #f8f8f8;border-bottom:1px solid #f8f8f8;"></div>
<div style="left:620px;top:300px;width:100px;height:20px;border-bottom:1px solid #f6f6f6;"></div>
<div style="left:18px;top:20px;width:1px;height:60px;background:#bfc3ca;"></div>
<div style="left:18px;top:80px;width:1px;height:232px;background:#e4e6f0;"></div>
</div>
<div style="left:1081px;top:143px;width:98px;height:23px;border:2px solid #eeaab2;background:#eef0f3;"></div>
<div class="t" style="left:1086px;top:145px;font-size:14px;line-height:21px;">Angel</div>
<div style="left:1122px;top:146px;width:1.5px;height:18px;background:#111;"></div>
<div class="t" style="left:32px;top:503px;font-size:14px;color:#8a8a8a;">Related Publications</div>
<div style="left:31px;top:520px;width:902px;height:333px;border:1px solid #a6a6a6;background:#fff;"></div>
<div style="left:32px;top:521px;width:900px;height:27px;background:#b4d8fb;"></div>
<div class="t" style="left:154px;top:523px;font-size:14px;color:#7d8b9c;">AuthorID</div>
<div class="t" style="left:215px;top:523px;font-size:14px;color:#7d8b9c;">PubTitle</div>
<div style="left:51px;top:580px;width:881px;height:32px;background:#f0f0f0;"></div>
<div style="left:31px;top:547px;width:20px;height:66px;border:1px solid #111;border-right-width:1.5px;border-bottom-width:1.5px;background:#fff;"></div>
<div style="left:31px;top:579px;width:20px;height:1.5px;background:#111;"></div>
<svg style="left:39px;top:582px" width="8" height="12"><path d="M1 1 L7 6 L1 11 Z" fill="#555"/></svg>
<div style="left:54px;top:552px;width:157px;height:22px;border:1px solid #a8a8a8;background:#fff;"></div>
<div class="t" style="left:56px;top:552px;font-size:14px;line-height:21px;">Cronin, Angel</div>
<div style="left:193px;top:553px;width:17px;height:20px;background:#e6e6e6;border:1px solid #b3b3b3;"></div>
<svg style="left:196px;top:559px" width="11" height="8"><path d="M1.5 1.5 L5.5 5.5 L9.5 1.5" fill="none" stroke="#333" stroke-width="1.1"/></svg>
<div style="left:214px;top:552px;width:637px;height:23px;border:1px solid #a8a8a8;background:#fff;"></div>
<div class="t" style="left:216px;top:552px;font-size:13.7px;line-height:21px;">Characteristics of Patients Initiating Ocrelizumab vs Other Disease-Modifying Therapies in a US Natic</div>
<div style="left:54px;top:584px;width:157px;height:22px;border:1px solid #a8a8a8;background:#f0f0f0;"></div>
<div style="left:193px;top:585px;width:17px;height:20px;background:#e6e6e6;border:1px solid #b3b3b3;"></div>
<svg style="left:196px;top:591px" width="11" height="8"><path d="M1.5 1.5 L5.5 5.5 L9.5 1.5" fill="none" stroke="#333" stroke-width="1.1"/></svg>
<div style="left:214px;top:584px;width:637px;height:23px;border:1px solid #a8a8a8;background:#f0f0f0;"></div>
<svg style="left:836px;top:587px" width="11" height="20"><path d="M1.5 7.5 L5 3.2 L8.5 7.5 M1.5 12.5 L5 16.8 L8.5 12.5" fill="none" stroke="#3a3a3a" stroke-width="1.6"/></svg>
<div style="left:31px;top:835px;width:902px;height:18px;border:1px solid #a0a0a4;background:linear-gradient(#f6f6f8 0%,#f0f0f3 48%,#e7e7eb 55%,#e4e4e9 100%);"></div>
<div class="t" style="left:37px;top:836px;font-size:11px;line-height:18px;color:#555;">Record:</div>
<svg style="left:82px;top:841px" width="8" height="8"><rect x="1" y="0" width="1.2" height="7" fill="#333"/><path d="M3 3.5 L7 0 V7 Z" fill="#333"/></svg>
<svg style="left:100px;top:841px" width="6" height="8"><path d="M5 0 L1 3.5 L5 7 Z" fill="#333"/></svg>
<div style="left:111px;top:837px;width:50px;height:15px;background:#fff;border:1px solid #d8d8d8;border-bottom:none;"></div>
<div class="t" style="left:113px;top:836px;font-size:12px;line-height:18px;color:#000;">2 of 2</div>
<svg style="left:169px;top:841px" width="6" height="8"><path d="M1 0 L5 3.5 L1 7 Z" fill="#c2c2c2"/></svg>
<svg style="left:186px;top:841px" width="8" height="8"><path d="M0 0 L5 3.5 L0 7 Z M6.5 0 V7" stroke="#333" fill="#333" stroke-width="1"/></svg>
<svg style="left:200px;top:841px" width="11" height="8"><path d="M0 0 L4 3.5 L0 7 Z" fill="#c2c2c2"/><path d="M6 1.5 L9 4.5 M9 1.5 L6 4.5 M7.5 0.5 V5.5" stroke="#eee8cc" stroke-width="1"/></svg>
<div style="left:218px;top:836px;width:1px;height:16px;background:#a8a8ac;"></div>
<svg style="left:226px;top:837px" width="16" height="14"><path d="M1 1 H11 L7 6 V11 L5 12 V6 Z" fill="#9a9a9a"/><path d="M9 8 L14 13 M14 8 L9 13" stroke="#a0a0a0" stroke-width="1.2"/></svg>
<div class="t" style="left:245px;top:836px;font-size:11.5px;line-height:18px;color:#a9a9a9;">No Filter</div>
<div style="left:298px;top:836px;width:1px;height:16px;background:#a8a8ac;"></div>
<div style="left:304px;top:837px;width:70px;height:15px;background:#fff;border:1px solid #d0d0d0;border-bottom:none;"></div>
<div class="t" style="left:306px;top:836px;font-size:11px;line-height:18px;color:#000;">Search</div>
<div class="t" style="left:956px;top:492px;font-size:13.8px;color:#808080;">Authors Not Used</div>
<div style="left:955px;top:508px;width:762px;height:277px;border:1px solid #a6a6a6;background:#fff;"></div>
<div style="left:956px;top:509px;width:760px;height:71px;background:#b4d8fb;"></div>
<div class="t" style="left:975px;top:510px;font-size:24.3px;line-height:32px;color:#77879a;">Authors Not Used</div>
<div class="t" style="left:1021px;top:556px;font-size:14px;color:#7d8b9c;">ID</div>
<div class="t" style="left:1039px;top:556px;font-size:13.5px;color:#7d8b9c;">Name Last</div>
<div class="t" style="left:1219px;top:556px;font-size:13.5px;color:#7d8b9c;">Name First</div>
<div class="t" style="left:1399px;top:556px;font-size:14px;color:#7d8b9c;">Name Middle</div>
<div style="left:955px;top:579px;width:20px;height:38px;border:1px solid #111;border-right-width:1.5px;border-bottom-width:1.5px;background:#fff;"></div>
<svg style="left:963px;top:582px" width="8" height="12"><path d="M1 1 L7 6 L1 11 Z" fill="#555"/></svg>
<div style="left:998px;top:584px;width:37px;height:22px;border:1px solid #a8a8a8;background:#fff;"></div>
<div class="t" style="left:998px;top:585px;width:35px;text-align:right;line-height:21px;font-size:12.6px;">1215</div>
<div style="left:1038px;top:584px;width:177px;height:25px;border:1px solid #a8a8a8;background:#fff;"></div>
<div class="t" style="left:1040px;top:584px;font-size:14px;line-height:21px;">Alex</div>
<div style="left:1218px;top:584px;width:177px;height:25px;border:1px solid #a8a8a8;background:#fff;"></div>
<div class="t" style="left:1220px;top:584px;font-size:14px;line-height:21px;">Rovira</div>
<div style="left:1398px;top:584px;width:165px;height:25px;border:1px solid #a8a8a8;background:#fff;"></div>
<div style="left:1582px;top:581px;width:97px;height:24px;border:1px solid #a9c3de;border-radius:3px;background:linear-gradient(#e6f1fc,#bcd7f5);font-size:14.4px;line-height:21px;text-align:center;color:#2e3a48;white-space:nowrap;">Delete Author</div>
<div style="left:1011px;top:836px;width:97px;height:28px;border:1px solid #a9c3de;border-radius:3px;background:linear-gradient(#e6f1fc,#c0d9f5);font-size:13px;line-height:26px;text-align:center;color:#2e3a48;">OK</div>
<div style="left:1114px;top:836px;width:97px;height:28px;border:1px solid #a9c3de;border-radius:3px;background:linear-gradient(#e6f1fc,#c0d9f5);font-size:13px;line-height:26px;text-align:center;color:#2e3a48;">Cancel</div>
</body></html>
